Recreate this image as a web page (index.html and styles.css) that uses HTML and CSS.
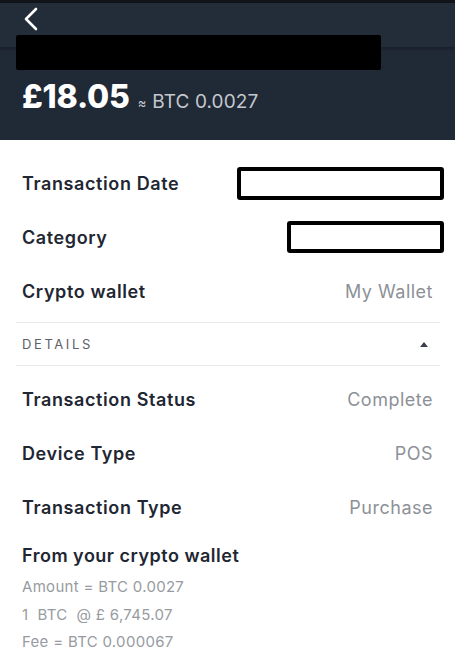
FILE: index.html
```html
<!DOCTYPE html>
<html lang="en">
<head>
  <meta charset="UTF-8">
  <meta name="viewport" content="width=device-width, initial-scale=1.0">
  <title>Transaction</title>
  <link rel="stylesheet" href="styles.css">
</head>
<body>
  <div class="header">
    <div class="topbar">
      <button class="back-btn" aria-label="Back">
        <svg width="16" height="24" viewBox="0 0 16 24"><path d="M13 2 L3 12 L13 22" fill="none" stroke="#fff" stroke-width="2.6" stroke-linecap="round" stroke-linejoin="round"/></svg>
      </button>
    </div>
    <div class="merchant"></div>
    <div class="amount">
      <span class="fiat">£18.05</span>
      <span class="approx">≈</span>
      <span class="btc">BTC 0.0027</span>
    </div>
  </div>

  <div class="content">
    <div class="row">
      <span class="label">Transaction Date</span>
      <span class="redact redact-wide"></span>
    </div>
    <div class="row">
      <span class="label">Category</span>
      <span class="redact redact-narrow"></span>
    </div>
    <div class="row">
      <span class="label">Crypto wallet</span>
      <span class="value">My Wallet</span>
    </div>

    <div class="section-head">
      <span>DETAILS</span>
      <span class="caret"></span>
    </div>

    <div class="row">
      <span class="label">Transaction Status</span>
      <span class="value">Complete</span>
    </div>
    <div class="row">
      <span class="label">Device Type</span>
      <span class="value">POS</span>
    </div>
    <div class="row">
      <span class="label">Transaction Type</span>
      <span class="value">Purchase</span>
    </div>

    <div class="wallet">
      <h3>From your crypto wallet</h3>
      <p>Amount = BTC 0.0027</p>
      <p>1&nbsp; BTC&nbsp; @ £ 6,745.07</p>
      <p>Fee = BTC 0.000067</p>
    </div>
  </div>
</body>
</html>
```

FILE: styles.css
```css
body {
  font-family: Inter, "Noto Sans", sans-serif;
  background-color: #fff;
  margin: 0;
  padding: 0;
  color: #1f2733;
}
.header {
  background: #202936;
  border-top: 3px solid #111418;
  height: 140px;
  box-sizing: border-box;
}
.topbar {
  height: 44px;
  background: #232c39;
  box-shadow: 0 2px 3px rgba(0, 0, 0, 0.25);
  padding-left: 23px;
}
.back-btn {
  background: none;
  border: none;
  padding: 0;
  margin-top: 4px;
  cursor: pointer;
}
.merchant {
  position: relative;
  margin: -12px 0 0 16px;
  width: 365px;
  height: 35px;
  background: #000;
  border-radius: 2px;
}
.amount {
  display: flex;
  align-items: baseline;
  padding: 7px 0 0 22px;
}
.fiat {
  color: #fff;
  font-size: 32px;
  font-weight: 800;
  letter-spacing: -0.2px;
}
.approx {
  color: #c4c8ce;
  font-size: 13px;
  margin: 0 6px 0 8px;
}
.btc {
  color: #c4c8ce;
  font-size: 19px;
  letter-spacing: 0.1px;
}
.content {
  padding: 16px 21px 0 22px;
}
.row {
  display: flex;
  justify-content: space-between;
  align-items: center;
  height: 54px;
}
.label {
  font-size: 18px;
  font-weight: 600;
  letter-spacing: 0.6px;
  color: #1f2733;
}
.value {
  font-size: 18px;
  letter-spacing: 0.5px;
  color: #8d9197;
  margin-right: 1px;
}
.redact {
  display: block;
  height: 33px;
  margin-right: -10px;
  box-sizing: border-box;
  border: 4px solid #000;
  border-radius: 3px;
}
.redact-wide { width: 207px; }
.redact-narrow { width: 157px; height: 32px; }
.section-head {
  display: flex;
  justify-content: space-between;
  align-items: center;
  height: 42px;
  margin: 4px -6px 0 -6px;
  padding: 0 12px 0 6px;
  border-top: 1px solid #e8e9eb;
  border-bottom: 1px solid #e8e9eb;
  font-size: 13px;
  letter-spacing: 2.6px;
  color: #5c6168;
}
.caret {
  width: 0;
  height: 0;
  border-left: 4px solid transparent;
  border-right: 4px solid transparent;
  border-bottom: 5px solid #3a3f47;
}
.section-head + .row { margin-top: 6px; }
.wallet h3 {
  margin: 11px 0 7px;
  font-size: 18px;
  font-weight: 600;
  letter-spacing: 0.5px;
}
.wallet p {
  margin: 0;
  font-size: 15px;
  letter-spacing: 0.3px;
  line-height: 27.5px;
  color: #979ba1;
}
```
